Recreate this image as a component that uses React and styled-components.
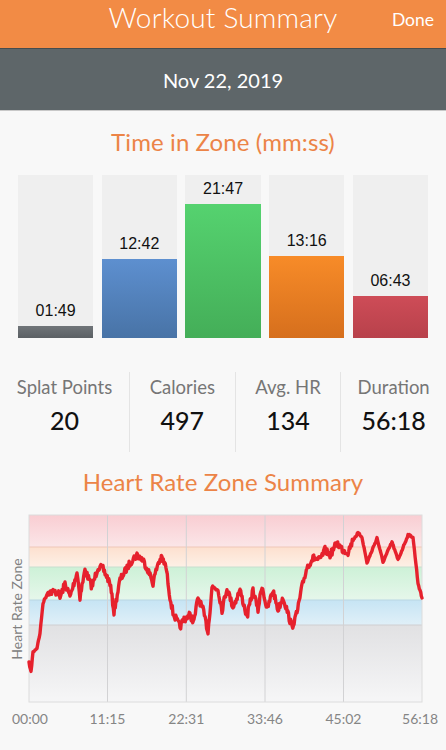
import React from "react";
import styled, { createGlobalStyle } from "styled-components";

const Global = createGlobalStyle`
  html, body { margin: 0; padding: 0; background: #f8f8f8; }
  body { font-family: "Lato", "Noto Sans", sans-serif; }
`;

const Page = styled.div`
  width: 446px;
  height: 750px;
  overflow: hidden;
  background: #f8f8f8;
`;

const TopBar = styled.header`
  height: 48px;
  background: #f28b45;
  position: relative;
  display: flex;
  justify-content: center;
  box-shadow: 0 1px 0 rgba(0, 0, 0, 0.25);
`;

const Title = styled.h1`
  margin: 0;
  font-weight: 300;
  font-size: 28px;
  line-height: 34px;
  color: #fff;
  letter-spacing: 0.2px;
`;

const Done = styled.button`
  position: absolute;
  right: 12px;
  top: 9px;
  background: none;
  border: none;
  padding: 0;
  color: #fff;
  font-family: inherit;
  font-size: 17.5px;
  font-weight: 400;
`;

const DateBar = styled.div`
  height: 61px;
  background: #5e6669;
  border-bottom: 1px solid #c8c8c8;
  display: flex;
  align-items: center;
  justify-content: center;
  color: #fff;
  font-size: 20px;
  padding-top: 1px;
`;

const SectionTitle = styled.h2`
  margin: ${(p) => p.$margin};
  text-align: center;
  font-weight: 400;
  font-size: 24px;
  line-height: 28px;
  color: #ec8447;
  letter-spacing: 0.1px;
`;

const Bars = styled.div`
  display: flex;
  gap: 8.5px;
  padding: 0 18px;
  height: 163px;
  margin-top: 19px;
`;

const Column = styled.div`
  flex: 1;
  background: #efefef;
  display: flex;
  flex-direction: column;
  justify-content: flex-end;
  align-items: stretch;
`;

const BarLabel = styled.div`
  font-family: "Liberation Sans", Arial, sans-serif;
  font-size: 16px;
  line-height: 20px;
  text-align: center;
  color: #111;
  margin-bottom: 5px;
`;

const Fill = styled.div`
  background: linear-gradient(${(p) => p.$top}, ${(p) => p.$bottom});
  border-top: 1px solid ${(p) => p.$top};
`;

const Stats = styled.div`
  display: grid;
  grid-template-columns: 129px 1fr 1fr 1fr;
  margin-top: 34px;
  height: 80px;
`;

const Stat = styled.div`
  display: flex;
  flex-direction: column;
  align-items: center;
  border-left: ${(p) => (p.$first ? "none" : "1px solid #e4e4e4")};
`;

const StatLabel = styled.div`
  font-size: 18.5px;
  color: #767676;
  line-height: 22px;
  margin-top: 4px;
`;

const StatValue = styled.div`
  font-size: 25px;
  font-weight: 500;
  color: #111;
  line-height: 30px;
  margin-top: 7px;
`;

const Chart = styled.svg`
  display: block;
  margin-top: 9px;
`;

const zones = [
  { time: "01:49", sec: 109, top: "#6e7377", bottom: "#5b6064" },
  { time: "12:42", sec: 762, top: "#5d8fcf", bottom: "#4873a6" },
  { time: "21:47", sec: 1307, top: "#55d26f", bottom: "#44ae58" },
  { time: "13:16", sec: 796, top: "#f78b28", bottom: "#d66f1d" },
  { time: "06:43", sec: 403, top: "#cd4c57", bottom: "#b8414b" },
];

const stats = [
  ["Splat Points", "20"],
  ["Calories", "497"],
  ["Avg. HR", "134"],
  ["Duration", "56:18"],
];

const keys = [
  [29, 663], [31, 672], [33, 652], [37, 648], [40, 633], [43, 603], [48, 592],
  [58, 592], [60, 598], [65, 583], [70, 597], [74, 583], [77, 572], [80, 597],
  [85, 570], [92, 587], [98, 567], [103, 569], [110, 583], [114, 612], [120, 580],
  [127, 568], [132, 560], [137, 555], [143, 560], [148, 570], [153, 583], [158, 563],
  [162, 558], [166, 567], [170, 597], [173, 613], [180, 627], [184, 619], [190, 615],
  [194, 622], [198, 597], [203, 610], [208, 632], [212, 587], [218, 589], [222, 610],
  [227, 588], [233, 607], [240, 590], [247, 617], [253, 590], [258, 610], [262, 585],
  [267, 610], [273, 590], [278, 610], [283, 597], [292, 627], [297, 613], [302, 587],
  [307, 567], [313, 558], [320, 560], [325, 550], [330, 555], [337, 543], [343, 550],
  [348, 552], [353, 540], [358, 533], [362, 537], [367, 563], [377, 538], [383, 562],
  [392, 542], [398, 560], [408, 535], [413, 537], [418, 583], [422, 598],
];

// jagged heart-rate trace: key points plus seeded jitter
function hrPath() {
  let seed = 7;
  const rnd = () => {
    seed = (seed * 16807) % 2147483647;
    return seed / 2147483647;
  };
  const pts = [];
  for (let i = 0; i < keys.length - 1; i++) {
    const [x0, y0] = keys[i];
    const [x1, y1] = keys[i + 1];
    const steps = Math.max(1, Math.round((x1 - x0) / 0.7));
    for (let s = 0; s < steps; s++) {
      const t = s / steps;
      const calm = x0 > 350 || x0 < 45;
      const j = calm ? 1 : 3.6;
      pts.push([x0 + (x1 - x0) * t, y0 + (y1 - y0) * t + (rnd() - 0.5) * 2 * j]);
    }
  }
  pts.push(keys[keys.length - 1]);
  return "M" + pts.map(([x, y]) => `${x.toFixed(1)} ${y.toFixed(1)}`).join(" L");
}

const bands = [
  { id: "bRed", y: 515, h: 32, a: "#f9cdd2", b: "#fbe6e8" },
  { id: "bOrange", y: 547, h: 20, a: "#fde0cf", b: "#fdf0e6" },
  { id: "bGreen", y: 567, h: 33, a: "#cdf1d7", b: "#e6f7eb" },
  { id: "bBlue", y: 600, h: 25, a: "#c6e4f4", b: "#e0f0f8" },
  { id: "bGray", y: 625, h: 77, a: "#e1e1e3", b: "#f6f6f7" },
];

const gridX = [29, 107.5, 186.3, 265, 343.5, 422];
const ticks = ["00:00", "11:15", "22:31", "33:46", "45:02", "56:18"];

const HRChart = () => (
  <Chart width="446" height="232" viewBox="0 505 446 232">
    <defs>
      {bands.map((b) => (
        <linearGradient key={b.id} id={b.id} x1="0" y1="0" x2="0" y2="1">
          <stop offset="0" stopColor={b.a} />
          <stop offset="1" stopColor={b.b} />
        </linearGradient>
      ))}
    </defs>
    {bands.map((b) => (
      <rect key={b.id} x="29" y={b.y} width="393" height={b.h} fill={`url(#${b.id})`} />
    ))}
    {[547, 567, 600, 625].map((y, i) => (
      <line key={y} x1="29" x2="422" y1={y} y2={y} stroke={["#efc7b8", "#c7dfcf", "#b9d6e2", "#cfcfd2"][i]} strokeWidth="1" />
    ))}
    {gridX.slice(1, 5).map((x) => (
      <line key={x} x1={x} x2={x} y1="515" y2="702" stroke="#d2d2d4" strokeWidth="1" />
    ))}
    <rect x="29" y="515" width="393" height="187" fill="none" stroke="#dcdcdc" strokeWidth="1" />
    <path d={hrPath()} fill="none" stroke="#e6212d" strokeWidth="3.4" strokeLinejoin="round" strokeLinecap="round" />
    <text
      x="0" y="0"
      transform="translate(22 609) rotate(-90)"
      textAnchor="middle"
      fontFamily="Lato, sans-serif"
      fontSize="14"
      fill="#808080"
    >
      Heart Rate Zone
    </text>
    {ticks.map((t, i) => (
      <text
        key={t}
        x={i === 0 ? 12 : i === 5 ? 438 : gridX[i]}
        y="724"
        textAnchor={i === 0 ? "start" : i === 5 ? "end" : "middle"}
        fontFamily="Lato, sans-serif"
        fontSize="14"
        fill="#858585"
      >
        {t}
      </text>
    ))}
  </Chart>
);

export default function App() {
  return (
    <Page>
      <Global />
      <TopBar>
        <Title>Workout Summary</Title>
        <Done>Done</Done>
      </TopBar>
      <DateBar>Nov 22, 2019</DateBar>
      <SectionTitle $margin="17px 0 0">Time in Zone (mm:ss)</SectionTitle>
      <Bars>
        {zones.map((z) => (
          <Column key={z.time}>
            <BarLabel>{z.time}</BarLabel>
            <Fill $top={z.top} $bottom={z.bottom} style={{ height: Math.round((z.sec / 1307) * 133) }} />
          </Column>
        ))}
      </Bars>
      <Stats>
        {stats.map(([label, value], i) => (
          <Stat key={label} $first={i === 0}>
            <StatLabel>{label}</StatLabel>
            <StatValue>{value}</StatValue>
          </Stat>
        ))}
      </Stats>
      <SectionTitle $margin="16px 0 0">Heart Rate Zone Summary</SectionTitle>
      <HRChart />
    </Page>
  );
}
